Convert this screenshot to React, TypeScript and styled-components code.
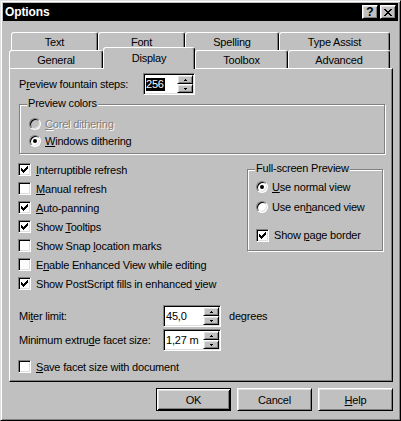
import React from 'react';
import styled, { createGlobalStyle, css } from 'styled-components';

const GlobalStyle = createGlobalStyle`
  html, body {
    margin: 0;
    padding: 0;
    background: #c0c0c0;
  }
  body {
    font-family: "Liberation Sans", Arial, sans-serif;
    font-size: 11px;
    letter-spacing: -0.2px;
    color: #000;
  }
`;

const raised = css`
  border: 1px solid;
  border-color: #fff #000 #000 #fff;
  box-shadow: inset 1px 1px #dfdfdf, inset -1px -1px #808080;
`;

const sunken = css`
  border: 1px solid;
  border-color: #808080 #fff #fff #808080;
  box-shadow: inset 1px 1px #000, inset -1px -1px #dfdfdf;
`;

// turns rows of '#' into a pixel path
const pixels = (rows: string[]) =>
  rows
    .map((row, y) =>
      row
        .split('')
        .map((c, x) => (c === '#' ? `M${x} ${y}h1v1h-1z` : ''))
        .join('')
    )
    .join('');

const CHECK = pixels([
  '......#',
  '.....##',
  '#...###',
  '##.###.',
  '#####..',
  '.###...',
  '..#....',
]);

const CLOSE = pixels([
  '##....##',
  '.##..##.',
  '..####..',
  '...##...',
  '..####..',
  '.##..##.',
  '##....##',
]);

const UP = pixels(['.#.', '###']);
const DOWN = pixels(['###', '.#.']);

const Window = styled.div`
  width: 401px;
  height: 421px;
  box-sizing: border-box;
  background: #c0c0c0;
  border: 1px solid;
  border-color: #dfdfdf #000 #000 #dfdfdf;
  box-shadow: inset 1px 1px #fff, inset -1px -1px #808080;
  padding: 2px;
  display: flex;
  flex-direction: column;
`;

const TitleBar = styled.div`
  height: 18px;
  background: #000;
  display: flex;
  align-items: center;
  padding: 0 2px;
  gap: 2px;
`;

const Title = styled.span`
  flex: 1;
  color: #fff;
  font-weight: bold;
  font-size: 12px;
  letter-spacing: -0.1px;
`;

const TitleButton = styled.div`
  width: 16px;
  height: 14px;
  box-sizing: border-box;
  background: #c0c0c0;
  ${raised};
  display: flex;
  align-items: center;
  justify-content: center;
  font-weight: bold;
  font-size: 12px;
  line-height: 12px;
  letter-spacing: 0;
`;

const Body = styled.div`
  padding: 11px 5px 0 6px;
  display: flex;
  flex-direction: column;
`;

const TabRow = styled.div<{ $indent: number }>`
  display: flex;
  height: 18px;
  padding-left: ${(p) => p.$indent}px;
`;

const Tab = styled.div<{ $w: number; $active?: boolean }>`
  box-sizing: border-box;
  width: ${(p) => p.$w}px;
  height: 18px;
  border: 1px solid;
  border-bottom: none;
  border-color: #fff #000 transparent #fff;
  border-radius: 3px 3px 0 0;
  box-shadow: inset -1px 0 #808080;
  background: #c0c0c0;
  display: flex;
  align-items: center;
  justify-content: center;
  ${(p) =>
    p.$active &&
    css`
      height: 22px;
      margin-top: -3px;
      padding-bottom: 2px;
      position: relative;
      z-index: 1;
    `}
`;

const Panel = styled.div`
  width: 384px;
  box-sizing: border-box;
  border: 1px solid;
  border-color: #fff #000 #000 #fff;
  box-shadow: inset -1px -1px #808080;
  padding: 4px 7px 5px 9px;
  display: flex;
  flex-direction: column;
`;

const FieldRow = styled.div<{ $mt?: number }>`
  display: flex;
  align-items: center;
  height: 22px;
  margin-top: ${(p) => p.$mt ?? 0}px;
`;

const FieldLabel = styled.span<{ $w: number }>`
  width: ${(p) => p.$w}px;
`;

const Spin = styled.div<{ $w: number }>`
  width: ${(p) => p.$w}px;
  height: 22px;
  box-sizing: border-box;
  background: #fff;
  ${sunken};
  padding: 1px;
  display: flex;
`;

const SpinText = styled.div`
  flex: 1;
  display: flex;
  align-items: center;
  padding-left: 1px;
`;

const Selected = styled.span`
  background: #000;
  color: #fff;
  line-height: 13px;
  padding: 0 1px 0 0;
`;

const SpinButtons = styled.div`
  width: 16px;
  display: flex;
  flex-direction: column;
`;

const SpinButton = styled.div`
  flex: 1;
  box-sizing: border-box;
  background: #c0c0c0;
  ${raised};
  display: flex;
  align-items: center;
  justify-content: center;
`;

const Unit = styled.span`
  margin-left: 8px;
`;

const Group = styled.div<{ $w?: number; $mt: number }>`
  position: relative;
  box-sizing: border-box;
  ${(p) => (p.$w ? `width: ${p.$w}px;` : '')}
  margin-top: ${(p) => p.$mt}px;
  border: 1px solid #808080;
  box-shadow: inset 1px 1px #fff, 1px 1px #fff;
  display: flex;
  flex-direction: column;
`;

const GroupLabel = styled.span`
  position: absolute;
  top: -8px;
  left: 7px;
  padding: 0 1px;
  line-height: 13px;
  background: #c0c0c0;
`;

const Option = styled.label<{ $h: number; $gap: number; $mt?: number; $disabled?: boolean }>`
  display: flex;
  align-items: center;
  height: ${(p) => p.$h}px;
  gap: ${(p) => p.$gap}px;
  margin-top: ${(p) => p.$mt ?? 0}px;
  ${(p) =>
    p.$disabled &&
    css`
      color: #808080;
      text-shadow: 1px 1px 0 #fff;
    `}
`;

const RadioDot = styled.span<{ $on?: boolean; $disabled?: boolean }>`
  width: 12px;
  height: 12px;
  box-sizing: border-box;
  border-radius: 50%;
  border: 1px solid;
  border-color: #808080 #fff #fff #808080;
  box-shadow: inset 1px 1px #000, inset -1px -1px #dfdfdf;
  background: ${(p) => (p.$disabled ? '#c0c0c0' : '#fff')};
  display: flex;
  align-items: center;
  justify-content: center;
  &::after {
    content: '';
    display: ${(p) => (p.$on ? 'block' : 'none')};
    width: 4px;
    height: 4px;
    border-radius: 50%;
    background: #000;
  }
`;

const CheckBox = styled.span`
  width: 13px;
  height: 13px;
  box-sizing: border-box;
  background: #fff;
  ${sunken};
  flex-shrink: 0;
  svg {
    display: block;
    margin: 2px;
  }
`;

const Columns = styled.div`
  display: flex;
  margin-top: 7px;
`;

const CheckList = styled.div`
  flex: 1;
  display: flex;
  flex-direction: column;
  margin-left: -1px;
  margin-top: -1px;
`;

const GroupBody = styled.div<{ $pad: string }>`
  padding: ${(p) => p.$pad};
  display: flex;
  flex-direction: column;
`;

const ButtonRow = styled.div`
  display: flex;
  justify-content: flex-end;
  gap: 6px;
  margin-top: 6px;
`;

const PushButton = styled.button<{ $default?: boolean }>`
  width: 75px;
  height: 23px;
  box-sizing: border-box;
  background: #c0c0c0;
  font: inherit;
  letter-spacing: inherit;
  color: #000;
  padding: 0;
  ${(p) =>
    p.$default
      ? css`
          border: 1px solid #000;
          box-shadow: inset 1px 1px #fff, inset -1px -1px #000, inset 2px 2px #dfdfdf,
            inset -2px -2px #808080;
        `
      : raised}
`;

const Key = styled.u``;

const Pix = ({ d, w, h }: { d: string; w: number; h: number }) => (
  <svg width={w} height={h} viewBox={`0 0 ${w} ${h}`} shapeRendering="crispEdges">
    <path d={d} fill="currentColor" />
  </svg>
);

const Check = ({ on }: { on?: boolean }) => (
  <CheckBox>{on && <Pix d={CHECK} w={7} h={7} />}</CheckBox>
);

const SpinBox = ({ w, children }: { w: number; children: React.ReactNode }) => (
  <Spin $w={w}>
    <SpinText>{children}</SpinText>
    <SpinButtons>
      <SpinButton>
        <Pix d={UP} w={3} h={2} />
      </SpinButton>
      <SpinButton>
        <Pix d={DOWN} w={3} h={2} />
      </SpinButton>
    </SpinButtons>
  </Spin>
);

const checks: { on: boolean; label: React.ReactNode }[] = [
  { on: true, label: <><Key>I</Key>nterruptible refresh</> },
  { on: false, label: <><Key>M</Key>anual refresh</> },
  { on: true, label: <><Key>A</Key>uto-panning</> },
  { on: true, label: <>Show <Key>T</Key>ooltips</> },
  { on: false, label: <>Show Snap <Key>l</Key>ocation marks</> },
  { on: false, label: <>E<Key>n</Key>able Enhanced View while editing</> },
  { on: true, label: <>Show PostScript fills in enhanced <Key>v</Key>iew</> },
];

const backTabs = [
  { label: 'Text', w: 87 },
  { label: 'Font', w: 87 },
  { label: 'Spelling', w: 94 },
  { label: 'Type Assist', w: 111 },
];

const frontTabs = [
  { label: 'General', w: 94 },
  { label: 'Display', w: 92, active: true },
  { label: 'Toolbox', w: 93 },
  { label: 'Advanced', w: 102 },
];

export default function App() {
  return (
    <>
      <GlobalStyle />
      <Window>
        <TitleBar>
          <Title>Options</Title>
          <TitleButton>?</TitleButton>
          <TitleButton>
            <Pix d={CLOSE} w={8} h={7} />
          </TitleButton>
        </TitleBar>

        <Body>
          <TabRow $indent={2}>
            {backTabs.map((t) => (
              <Tab key={t.label} $w={t.w}>{t.label}</Tab>
            ))}
          </TabRow>
          <TabRow $indent={0}>
            {frontTabs.map((t) => (
              <Tab key={t.label} $w={t.w} $active={t.active}>{t.label}</Tab>
            ))}
          </TabRow>

          <Panel>
            <FieldRow>
              <FieldLabel $w={124}>P<Key>r</Key>eview fountain steps:</FieldLabel>
              <SpinBox w={52}>
                <Selected>256</Selected>
              </SpinBox>
            </FieldRow>

            <Group $mt={9}>
              <GroupLabel>Preview colors</GroupLabel>
              <GroupBody $pad="10px 8px 4px 9px">
                <Option $h={17} $gap={4} $disabled>
                  <RadioDot $disabled />
                  <span><Key>C</Key>orel dithering</span>
                </Option>
                <Option $h={17} $gap={4}>
                  <RadioDot $on />
                  <span><Key>W</Key>indows dithering</span>
                </Option>
              </GroupBody>
            </Group>

            <Columns>
              <CheckList>
                {checks.map((c, i) => (
                  <Option key={i} $h={19} $gap={5}>
                    <Check on={c.on} />
                    <span>{c.label}</span>
                  </Option>
                ))}
              </CheckList>

              <Group $w={136} $mt={8} style={{ alignSelf: 'flex-start', marginRight: 2 }}>
                <GroupLabel>Full-screen Preview</GroupLabel>
                <GroupBody $pad="7px 4px 5px 8px">
                  <Option $h={20} $gap={4}>
                    <RadioDot $on />
                    <span><Key>U</Key>se normal view</span>
                  </Option>
                  <Option $h={20} $gap={4}>
                    <RadioDot />
                    <span>Use en<Key>h</Key>anced view</span>
                  </Option>
                  <Option $h={20} $gap={5} $mt={8}>
                    <Check on />
                    <span>Show <Key>p</Key>age border</span>
                  </Option>
                </GroupBody>
              </Group>
            </Columns>

            <FieldRow $mt={12}>
              <FieldLabel $w={144}>Mi<Key>t</Key>er limit:</FieldLabel>
              <SpinBox w={58}>45,0</SpinBox>
              <Unit>degrees</Unit>
            </FieldRow>
            <FieldRow $mt={2}>
              <FieldLabel $w={144}>Minimum extru<Key>d</Key>e facet size:</FieldLabel>
              <SpinBox w={58}>1,27 m</SpinBox>
            </FieldRow>

            <Option $h={19} $gap={5} $mt={6} style={{ marginLeft: -1 }}>
              <Check />
              <span><Key>S</Key>ave facet size with document</span>
            </Option>
          </Panel>

          <ButtonRow>
            <PushButton $default>OK</PushButton>
            <PushButton>Cancel</PushButton>
            <PushButton><Key>H</Key>elp</PushButton>
          </ButtonRow>
        </Body>
      </Window>
    </>
  );
}
